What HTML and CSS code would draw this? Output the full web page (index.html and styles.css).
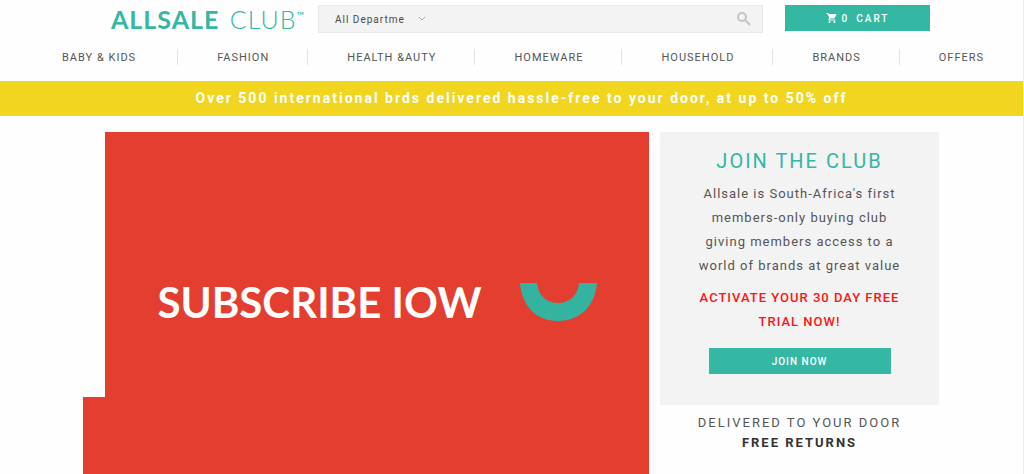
FILE: index.html
```html
<!DOCTYPE html>
<html lang="en">
  <head>
    <meta charset="UTF-8">
    <title>Allsale Club</title>
    <link rel="stylesheet" href="styles.css">
  </head>
  <body>
    <header class="top-bar">
      <a class="logo" href="#"><strong>ALLSALE</strong> <span class="logo-light">CLUB</span><sup>™</sup></a>
      <form class="search">
        <select class="search-select" aria-label="Department">
          <option>All Departme</option>
        </select>
        <svg class="chevron" viewBox="0 0 8 6"><path d="M1 1l3 3 3-3"/></svg>
        <input class="search-input" type="text" aria-label="Search">
        <button class="search-button" type="button" aria-label="Search">
          <svg viewBox="0 0 14 14"><circle cx="5" cy="5" r="4"/><path d="M8 8l5 5"/></svg>
        </button>
      </form>
      <button class="cart" type="button">
        <svg viewBox="0 0 24 24"><path d="M7 18c-1.100 0-1.990.9-1.990 2S5.900 22 7 22s2-.9 2-2-.9-2-2-2zM1 2v2h2l3.600 7.590-1.350 2.450c-.16.280-.25.610-.25.960 0 1.100.9 2 2 2h12v-2H7.420c-.14 0-.25-.11-.25-.25l.03-.12.900-1.630h7.450c.75 0 1.410-.41 1.750-1.030l3.580-6.490c.08-.14.120-.31.120-.48 0-.55-.45-1-1-1H5.210l-.94-2H1zm16 16c-1.100 0-1.990.9-1.990 2s.89 2 1.990 2 2-.9 2-2-.9-2-2-2z"/></svg>
        <span>0</span>
        <span class="cart-label">CART</span>
      </button>
    </header>

    <nav class="menu">
      <a href="#">BABY &amp; KIDS</a>
      <a href="#">FASHION</a>
      <a href="#">HEALTH &amp;AUTY</a>
      <a href="#">HOMEWARE</a>
      <a href="#">HOUSEHOLD</a>
      <a href="#">BRANDS</a>
      <a href="#">OFFERS</a>
    </nav>

    <div class="promo">Over 500 international brds delivered hassle-free to your door, at up to 50% off</div>

    <main class="content">
      <div class="hero-step"></div>
      <section class="hero">
        <h1>SUBSCRIBE IOW</h1>
        <svg class="smile" viewBox="0 0 77 38"><path d="M0 0H17C18 12 26 20 38 20S58 12 59 0H77C75 23 60 38 38 38S2 23 0 0z"/></svg>
      </section>
      <aside class="side">
        <div class="join">
          <h2>JOIN THE CLUB</h2>
          <p>Allsale is South-Africa's first<br>members-only buying club<br>giving members access to a<br>world of brands at great value</p>
          <p class="trial">ACTIVATE YOUR 30 DAY FREE<br>TRIAL NOW!</p>
          <button class="join-button" type="button">JOIN NOW</button>
        </div>
        <p class="delivery">DELIVERED TO YOUR DOOR<br><strong>FREE RETURNS</strong></p>
      </aside>
    </main>
  </body>
</html>
```
FILE: styles.css
```css
* {
  box-sizing: border-box;
}

body {
  margin: 0;
  min-height: 100vh;
  display: flex;
  flex-direction: column;
  background: #fefefe;
  color: #555;
  font-family: Roboto, sans-serif;
  border-right: 1px solid #eee;
}

h1, h2, p {
  margin: 0;
}

a {
  color: inherit;
  text-decoration: none;
}

button {
  border: 0;
  padding: 0;
  font-family: inherit;
  cursor: pointer;
}

/* header */
.top-bar {
  display: flex;
  align-items: flex-start;
  padding: 5px 93px 0 111px;
  height: 44px;
}

.logo {
  width: 207px;
  color: #34b7a3;
  font-family: Lato, sans-serif;
  font-size: 25px;
  line-height: 28px;
  white-space: nowrap;
}

.logo strong {
  font-weight: 700;
  letter-spacing: 1px;
}

.logo-light {
  margin-left: 4px;
  font-weight: 300;
  letter-spacing: 1px;
}

.logo sup {
  font-size: 10px;
  line-height: 0;
  vertical-align: 10px;
}

.search {
  flex: 1;
  display: flex;
  align-items: center;
  height: 28px;
  margin-right: 22px;
  background: #f3f3f3;
  border: 1px solid #e4eaee;
}

.search-select {
  appearance: none;
  width: 99px;
  padding: 0 0 0 16px;
  border: 0;
  background: none;
  color: #4a4a4a;
  font-family: Roboto, sans-serif;
  font-size: 10px;
  letter-spacing: 1px;
}

.chevron {
  width: 8px;
  height: 6px;
  fill: none;
  stroke: #aaa;
}

.search-input {
  flex: 1;
  min-width: 0;
  border: 0;
  background: none;
}

.search-button {
  width: 36px;
  height: 14px;
  background: none;
}

.search-button svg {
  display: block;
  width: 14px;
  height: 14px;
  margin: 0 auto;
  fill: none;
  stroke: #c4c4c4;
  stroke-width: 2;
}

.cart {
  display: flex;
  align-items: center;
  justify-content: center;
  gap: 4px;
  width: 145px;
  height: 26px;
  background: #34b7a3;
  color: #fff;
  font-size: 10px;
  font-weight: 500;
  letter-spacing: 2px;
}

.cart svg {
  width: 12px;
  height: 12px;
  fill: #fff;
}

.cart-label {
  margin-left: 3px;
}

/* department links */
.menu {
  display: flex;
  height: 37px;
  padding: 5px 0 0 26px;
}

.menu a {
  height: 16px;
  padding: 0 38px 0 39px;
  border-right: 1px solid #e4e4e4;
  font-size: 11px;
  line-height: 17px;
  letter-spacing: 1px;
  white-space: nowrap;
}

.menu a:first-child {
  padding-left: 36px;
  padding-right: 41px;
}

.menu a:last-child {
  padding-right: 0;
  border: 0;
}

.promo {
  height: 35px;
  padding-left: 20px;
  background: #f1d51f;
  color: #fff;
  font-size: 14px;
  font-weight: 700;
  line-height: 35px;
  letter-spacing: 2px;
  text-align: center;
}

.content {
  flex: 1;
  display: flex;
  padding: 16px 84px 0 83px;
}

/* red banner */
.hero-step {
  width: 22px;
  height: 77px;
  align-self: flex-end;
  background: #e43e30;
}

.hero {
  flex: 1;
  display: flex;
  align-items: center;
  justify-content: center;
  gap: 38px;
  padding-bottom: 2px;
  background: #e43e30;
  color: #fff;
}

.hero h1 {
  font-family: Lato, sans-serif;
  font-size: 42px;
  font-weight: 700;
  line-height: 48px;
  white-space: nowrap;
}

.smile {
  width: 77px;
  height: 38px;
  fill: #34b3a0;
}

/* right column */
.side {
  width: 279px;
  margin-left: 11px;
  text-align: center;
}

.join {
  height: 273px;
  padding: 16px 0 30px;
  background: #f3f3f3;
}

.join h2 {
  color: #34b7a3;
  font-size: 20px;
  font-weight: 400;
  line-height: 26px;
  letter-spacing: 2px;
}

.join p {
  margin-top: 8px;
  font-size: 13px;
  line-height: 24px;
  letter-spacing: 1px;
}

.join .trial {
  color: #fe1414;
  font-weight: 500;
}

.join-button {
  width: 182px;
  height: 26px;
  margin-top: 14px;
  background: #34b7a3;
  color: #fff;
  font-size: 10px;
  font-weight: 500;
  letter-spacing: 1px;
}

.delivery {
  padding-top: 8px;
  font-size: 13px;
  line-height: 20px;
  letter-spacing: 2px;
}

.delivery strong {
  color: #333;
  font-weight: 700;
}
```
